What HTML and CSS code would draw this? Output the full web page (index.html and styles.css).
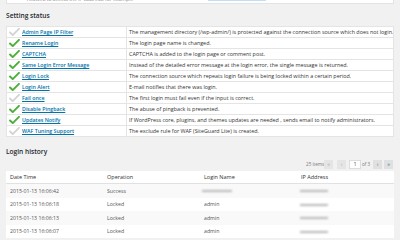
FILE: index.html
```html
<!DOCTYPE html>
<html>
<head>
<meta charset="utf-8">
<link rel="stylesheet" href="styles.css">
</head>
<body>
<div class="wrap">
  <div class="topbox"><span class="toptext">Allowed to access the IP address, for example</span><span class="topsel"></span></div>

  <h2 class="title">Setting status</h2>
  <table class="status">
    <tr><td class="feat"><div class="cell"><svg class="chk off" viewBox="0 0 12 9"><path d="M1 5 L4 8 L11 1"/></svg><a href="#">Admin Page IP Filter</a></div></td><td class="desc"><div class="cell">The management directory (/wp-admin/) is protected against the connection source which does not login.</div></td></tr>
    <tr><td class="feat"><div class="cell"><svg class="chk" viewBox="0 0 12 9"><path d="M1 5 L4 8 L11 1"/></svg><a href="#">Rename Login</a></div></td><td class="desc"><div class="cell">The login page name is changed.</div></td></tr>
    <tr><td class="feat"><div class="cell"><svg class="chk" viewBox="0 0 12 9"><path d="M1 5 L4 8 L11 1"/></svg><a href="#">CAPTCHA</a></div></td><td class="desc"><div class="cell">CAPTCHA is added to the login page or comment post.</div></td></tr>
    <tr><td class="feat"><div class="cell"><svg class="chk" viewBox="0 0 12 9"><path d="M1 5 L4 8 L11 1"/></svg><a href="#">Same Login Error Message</a></div></td><td class="desc"><div class="cell">Instead of the detailed error message at the login error, the single message is returned.</div></td></tr>
    <tr><td class="feat"><div class="cell"><svg class="chk" viewBox="0 0 12 9"><path d="M1 5 L4 8 L11 1"/></svg><a href="#">Login Lock</a></div></td><td class="desc"><div class="cell">The connection source which repeats login failure is being locked within a certain period.</div></td></tr>
    <tr><td class="feat"><div class="cell"><svg class="chk" viewBox="0 0 12 9"><path d="M1 5 L4 8 L11 1"/></svg><a href="#">Login Alert</a></div></td><td class="desc"><div class="cell">E-mail notifies that there was login.</div></td></tr>
    <tr><td class="feat"><div class="cell"><svg class="chk off" viewBox="0 0 12 9"><path d="M1 5 L4 8 L11 1"/></svg><a href="#">Fail once</a></div></td><td class="desc"><div class="cell">The first login must fail even if the input is correct.</div></td></tr>
    <tr><td class="feat"><div class="cell"><svg class="chk" viewBox="0 0 12 9"><path d="M1 5 L4 8 L11 1"/></svg><a href="#">Disable Pingback</a></div></td><td class="desc"><div class="cell">The abuse of pingback is prevented.</div></td></tr>
    <tr><td class="feat"><div class="cell"><svg class="chk" viewBox="0 0 12 9"><path d="M1 5 L4 8 L11 1"/></svg><a href="#">Updates Notify</a></div></td><td class="desc"><div class="cell">If WordPress core, plugins, and themes updates are needed , sends email to notify administrators.</div></td></tr>
    <tr><td class="feat"><div class="cell"><svg class="chk off" viewBox="0 0 12 9"><path d="M1 5 L4 8 L11 1"/></svg><a href="#">WAF Tuning Support</a></div></td><td class="desc"><div class="cell">The exclude rule for WAF (SiteGuard Lite) is created.</div></td></tr>
  </table>

  <h2 class="title title2">Login history</h2>
  <div class="pager">
    <span class="items">25 items</span>
    <span class="pbtn b1">«</span>
    <span class="pbtn b2">‹</span>
    <span class="pinput">1</span>
    <span class="of">of 3</span>
    <span class="pbtn dark b3">›</span>
    <span class="pbtn dark b4">»</span>
  </div>
  <table class="history">
    <tr class="head"><th>Date Time</th><th>Operation</th><th>Login Name</th><th>IP Address</th></tr>
    <tr class="alt"><td>2015-01-13 16:06:42</td><td>Success</td><td><span class="blur w1"></span></td><td><span class="blur w2"></span></td></tr>
    <tr><td>2015-01-13 16:06:18</td><td>Locked</td><td>admin</td><td><span class="blur w2"></span></td></tr>
    <tr class="alt"><td>2015-01-13 16:06:13</td><td>Locked</td><td>admin</td><td><span class="blur w2"></span></td></tr>
    <tr><td>2015-01-13 16:06:07</td><td>Locked</td><td>admin</td><td><span class="blur w2"></span></td></tr>
  </table>
</div>
</body>
</html>
```

FILE: styles.css
```css
html, body {
  margin: 0;
  padding: 0;
  background: #f1f1f1;
  font-family: "Open Sans", "Liberation Sans", sans-serif;
  color: #444;
}
.wrap {
  padding: 0 6px 0 6px;
}
.topbox {
  height: 3px;
  background: #fff;
  border: 1px solid #e3e3e3;
  border-top: none;
  position: relative;
  overflow: hidden;
}
.toptext {
  display: block;
  font-size: 5px;
  line-height: 5px;
  margin-top: -3px;
  padding-left: 20px;
  color: #888;
}
.topsel {
  position: absolute;
  left: 201px;
  top: 0;
  width: 58px;
  height: 1px;
  background: #bfe1f3;
}
.title {
  margin: 6px 0 0 0;
  height: 11px;
  line-height: 11px;
  font-size: 6.6px;
  font-weight: 600;
  color: #23282d;
}
.status {
  margin-top: 5px;
  width: 388px;
  border-collapse: collapse;
  background: #fff;
  border: 1px solid #e1e1e1;
  font-size: 5.4px;
  table-layout: fixed;
}
.status td {
  padding: 0;
  border: 1px solid #e4e4e4;
  white-space: nowrap;
  overflow: hidden;
}
.status td.feat {
  width: 119px;
}
.cell {
  height: 10px;
  display: flex;
  align-items: center;
  padding-left: 2px;
  overflow: hidden;
}
.chk {
  flex: none;
  width: 11px;
  height: 8px;
  margin-right: 2px;
  margin-top: -1px;
}
.chk path {
  fill: none;
  stroke: #4caf3a;
  stroke-width: 2.2;
  stroke-linecap: round;
  stroke-linejoin: round;
}
.chk.off path {
  stroke: #d4d4d4;
}
.feat a {
  color: #0073aa;
  text-decoration: underline;
  font-weight: 600;
  font-size: 5.3px;
}
.desc {
  color: #333;
}
.title2 {
  margin-top: 9px;
}
.pager {
  margin-top: 2px;
  height: 10px;
  display: flex;
  justify-content: flex-start;
  align-items: center;
  padding-left: 300px;
  font-size: 4.6px;
  color: #777;
}
.pager > span {
  flex: 0 0 auto;
  box-sizing: border-box;
}
.items {
  width: 18px;
  white-space: nowrap;
}
.pbtn {
  width: 9px;
  height: 9px;
  background: #e5e5e5;
  color: #a0a5aa;
  display: flex;
  align-items: center;
  justify-content: center;
  font-size: 5.5px;
}
.b1 { margin-right: 4px; }
.b2 { margin-right: 3px; }
.b3 { margin-right: 2px; }
.pbtn.dark {
  color: #0073aa;
  background: #e0e0e0;
}
.pinput {
  width: 12px;
  height: 9px;
  background: #fff;
  border: 1px solid #ddd;
  display: flex;
  align-items: center;
  justify-content: center;
  color: #333;
  margin-right: 1px;
}
.of {
  width: 10px;
  white-space: nowrap;
  margin-right: 1px;
}
.history {
  margin-top: 2px;
  width: 388px;
  border-collapse: collapse;
  background: #fff;
  font-size: 5.2px;
  color: #555;
}
.history th {
  text-align: left;
  font-weight: 400;
  color: #333;
  height: 12px;
  padding: 0 0 0 4px;
  border-bottom: 1px solid #e1e1e1;
  font-size: 5.5px;
}
.history th:nth-child(1), .history td:nth-child(1) { width: 93px; }
.history th:nth-child(2), .history td:nth-child(2) { width: 93px; }
.history th:nth-child(3), .history td:nth-child(3) { width: 93px; }
.history td {
  height: 13.5px;
  padding: 0 0 0 4px;
}
.history tr.alt td {
  background: #f9f9f9;
}
.blur {
  display: inline-block;
  height: 2px;
  background: #b8b8b8;
  filter: blur(1px);
  vertical-align: middle;
}
.blur.w1 { width: 30px; margin-left: -2px; }
.blur.w2 { width: 28px; margin-left: -1px; }
```
